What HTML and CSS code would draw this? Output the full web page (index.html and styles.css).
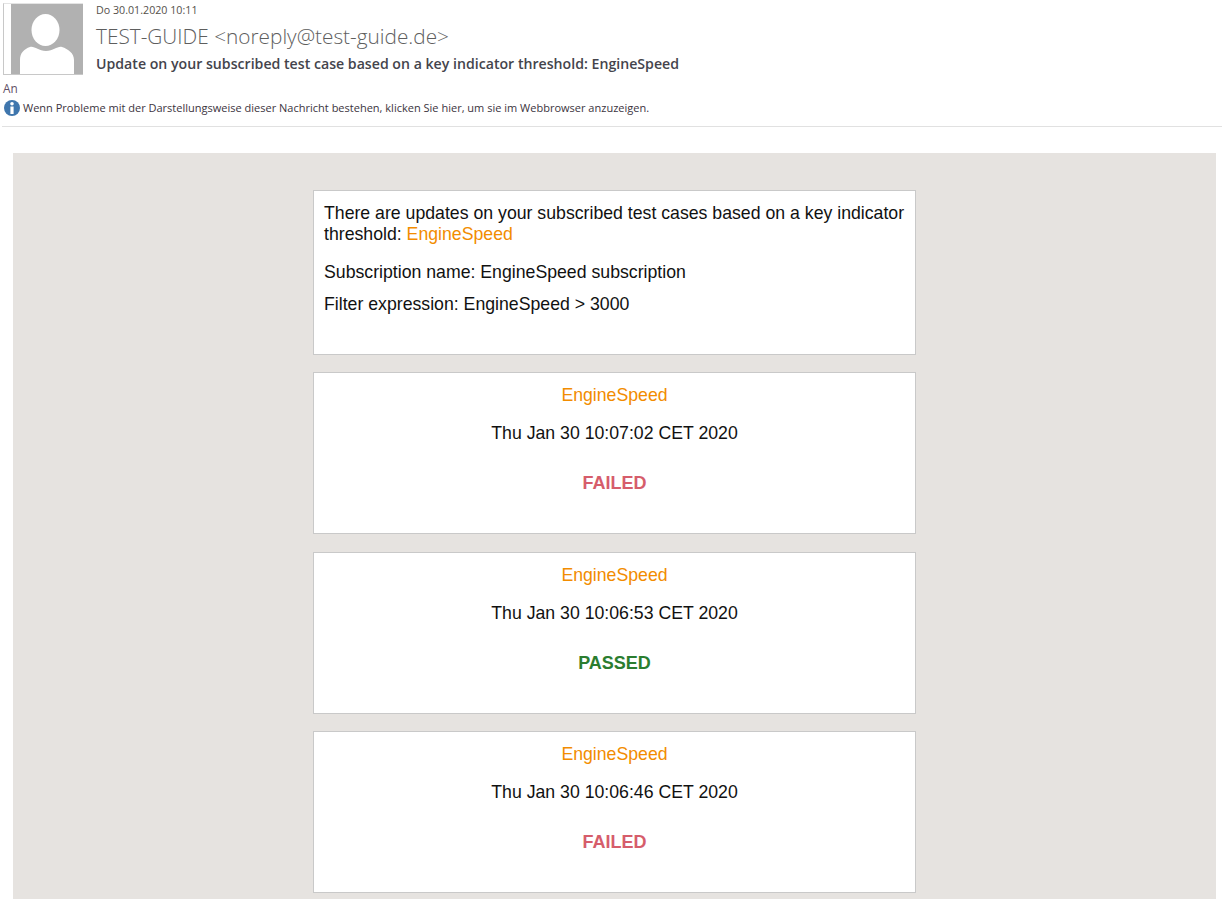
FILE: index.html
```html
<!DOCTYPE html>
<html lang="de">
<head>
  <meta charset="UTF-8">
  <meta name="viewport" content="width=device-width, initial-scale=1.0">
  <title>Update on your subscribed test case</title>
  <link rel="stylesheet" href="styles.css">
</head>
<body>
  <!-- Mail header -->
  <header class="mail-head">
    <div class="sender">
      <div class="avatar">
        <svg width="72" height="72" viewBox="0 0 72 72">
          <rect width="72" height="72" fill="#b1b1b1"/>
          <ellipse cx="34.500" cy="26" rx="14" ry="16" fill="#fff"/>
          <path d="M9 72 V56 C9 49 13 45 19 43 C24 42 27 47 35 47 C43 47 46 42 51 43 C57 45 63 49 63 56 V72 Z" fill="#fff"/>
        </svg>
      </div>
      <div class="sender-text">
        <div class="date">Do 30.01.2020 10:11</div>
        <div class="from">TEST-GUIDE &lt;noreply@test-guide.de&gt;</div>
        <div class="subject">Update on your subscribed test case based on a key indicator threshold: EngineSpeed</div>
      </div>
    </div>
    <div class="to">An</div>
    <div class="notice">
      <svg width="16" height="16" viewBox="0 0 16 16">
        <circle cx="8" cy="8" r="8" fill="#3f76ad"/>
        <circle cx="8" cy="3.800" r="1.800" fill="#fff"/>
        <rect x="6.400" y="6.500" width="3.200" height="7.500" fill="#fff"/>
      </svg>
      <span>Wenn Probleme mit der Darstellungsweise dieser Nachricht bestehen, klicken Sie hier, um sie im Webbrowser anzuzeigen.</span>
    </div>
  </header>

  <!-- Mail body -->
  <main class="panel">
    <section class="card intro">
      <p class="intro-title">There are updates on your subscribed test cases based on a key indicator threshold: <span class="accent">EngineSpeed</span></p>
      <p class="intro-line">Subscription name: EngineSpeed subscription</p>
      <p class="intro-line">Filter expression: EngineSpeed &gt; 3000</p>
    </section>

    <section class="card result">
      <p class="accent">EngineSpeed</p>
      <p class="time">Thu Jan 30 10:07:02 CET 2020</p>
      <p class="status failed">FAILED</p>
    </section>

    <section class="card result">
      <p class="accent">EngineSpeed</p>
      <p class="time">Thu Jan 30 10:06:53 CET 2020</p>
      <p class="status passed">PASSED</p>
    </section>

    <section class="card result">
      <p class="accent">EngineSpeed</p>
      <p class="time">Thu Jan 30 10:06:46 CET 2020</p>
      <p class="status failed">FAILED</p>
    </section>
  </main>
</body>
</html>
```

FILE: styles.css
```css
html, body {
  height: 899px;
  overflow: hidden;
}

body {
  margin: 0;
  background-color: #ffffff;
  font-family: "Open Sans", sans-serif;
}

p {
  margin: 0;
}

/* Mail header */
.mail-head {
  height: 127px;
  margin-left: 2px;
  padding-top: 3px;
  box-sizing: border-box;
  border-bottom: 1px solid #e1e1e1;
}

.sender {
  display: flex;
  gap: 13px;
  margin-left: 1px;
}

.avatar {
  display: flex;
  justify-content: flex-end;
  width: 80px;
  height: 72px;
  box-sizing: border-box;
  border-left: 1px solid #c8c8c8;
  border-top: 1px solid #e4e4e4;
  border-bottom: 1px solid #c8c8c8;
  overflow: hidden;
}

.sender-text {
  min-width: 0;
}

.date {
  font-size: 10.700px;
  line-height: 14px;
  color: #55504a;
}

.from {
  margin-top: 6px;
  font-size: 20.800px;
  font-weight: 300;
  line-height: 27px;
  color: #5e5e5e;
}

.subject {
  margin-top: 5px;
  font-size: 14.150px;
  font-weight: 600;
  line-height: 18px;
  color: #44444c;
}

.to {
  margin: 6px 0 0 1px;
  font-size: 11.800px;
  line-height: 15px;
  color: #5f4f66;
}

.notice {
  display: flex;
  align-items: center;
  gap: 3px;
  margin: 4px 0 0 2px;
  font-size: 11.020px;
  line-height: 16px;
  color: #3c3440;
}

/* Mail body */
.panel {
  display: flex;
  flex-direction: column;
  align-items: center;
  gap: 17.500px;
  height: 746px;
  margin: 26px 6px 0 13px;
  padding-top: 36.750px;
  box-sizing: border-box;
  background-color: #e6e3e0;
  font-family: "Liberation Sans", Arial, sans-serif;
  font-size: 17.690px;
  color: #111111;
}

.card {
  width: 603px;
  box-sizing: border-box;
  background-color: #ffffff;
  border: 1px solid #c9c9c9;
}

.accent {
  color: #f28c00;
}

.intro {
  height: 165px;
  padding: 12px 10px 0;
}

.intro-title {
  line-height: 21px;
  margin-bottom: 17px;
}

.intro-line {
  line-height: 21px;
  margin-bottom: 11px;
}

.result {
  height: 162px;
  padding-top: 12px;
  text-align: center;
  line-height: 21px;
}

.time {
  margin-top: 17px;
}

.status {
  margin-top: 29px;
  font-size: 18px;
  font-weight: bold;
}

.failed {
  color: #d65d6b;
}

.passed {
  color: #2b7d2f;
}
```
